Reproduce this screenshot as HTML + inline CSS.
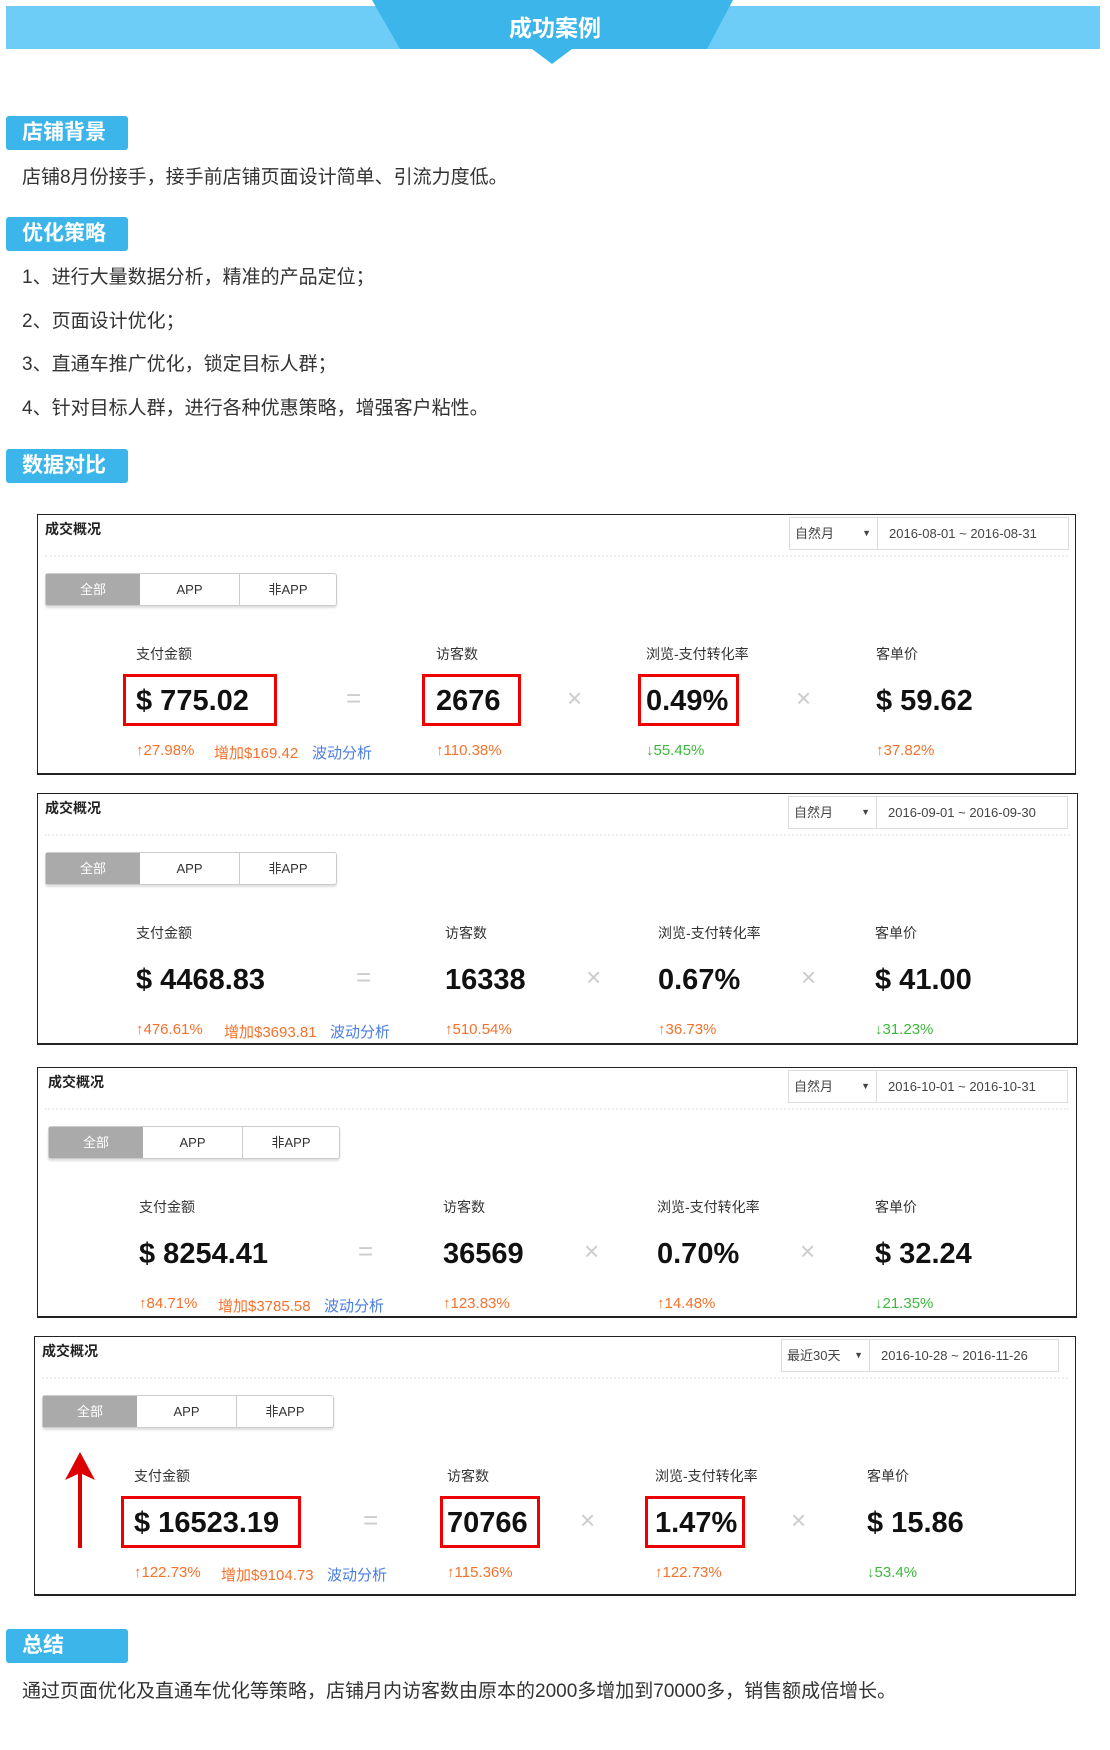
<!DOCTYPE html>
<html><head><meta charset="utf-8"><style>
*{margin:0;padding:0;box-sizing:border-box}
body{width:1110px;height:1750px;background:#fff;position:relative;overflow:hidden;font-family:"Liberation Sans","Noto Sans CJK SC",sans-serif;color:#333}
.a{position:absolute;white-space:nowrap}
.lbl{position:absolute;left:6px;width:122px;height:34px;background:#3bb5ea;border-radius:3px;color:#fff;font-weight:bold;font-size:21px;line-height:34px;padding-left:16px}
.txt{position:absolute;left:22px;font-size:19px;color:#333;line-height:24px}
.panel{position:absolute;border:1px solid #222;border-width:1px 1px 2px 1px;background:#fff}
.panel .t{position:absolute;left:7px;top:4px;font-size:14px;font-weight:bold;color:#222}
.dd{position:absolute;top:2px;height:33px;border:1px solid #ddd;font-size:13px;color:#444;line-height:31px;background:#fff}
.dot{position:absolute;left:7px;right:7px;top:40px;border-top:2px dotted #eee}
.tabs{position:absolute;left:7px;top:58px;width:292px;height:33px;border:1px solid #ccc;border-radius:3px;background:#fff;box-shadow:0 2px 2px #ddd;font-size:13px}
.tabs div{position:absolute;top:0;height:31px;line-height:31px;text-align:center}
.lab{position:absolute;top:129px;font-size:14px;color:#333}
.val{position:absolute;top:166px;font-size:29px;font-weight:bold;color:#111;line-height:40px}
.box{position:absolute;top:159px;height:52px;border:3px solid #e00}
.op{position:absolute;top:168px;font-size:26px;color:#ccc}
.st{position:absolute;top:227px;font-size:15px}
.o{color:#f5712b}.g{color:#3cb83c}.b{color:#4a7ee0}
</style></head><body>
<div class="a" style="left:6px;top:6px;width:1094px;height:43px;background:#6dcdf7"></div>
<div class="a" style="left:0;top:0;width:1110px;height:70px"><svg width="1110" height="70"><polygon points="372,0 733,0 707,49 572,49 552,64 532,49 400,49" fill="#3bb5ea"/></svg></div>
<div class="a" style="left:0;width:1110px;top:12px;text-align:center;color:#fff;font-weight:bold;font-size:23px;line-height:32px">成功案例</div>

<div class="lbl" style="top:116px">店铺背景</div>
<div class="txt" style="top:166px">店铺8月份接手，接手前店铺页面设计简单、引流力度低。</div>
<div class="lbl" style="top:217px">优化策略</div>
<div class="txt" style="top:266px">1、进行大量数据分析，精准的产品定位；</div>
<div class="txt" style="top:310px">2、页面设计优化；</div>
<div class="txt" style="top:353px">3、直通车推广优化，锁定目标人群；</div>
<div class="txt" style="top:397px">4、针对目标人群，进行各种优惠策略，增强客户粘性。</div>
<div class="lbl" style="top:449px">数据对比</div>

<!-- panel 1 -->
<div class="panel" style="left:37px;top:514px;width:1039px;height:261px">
<div class="t">成交概况</div>
<div class="dd" style="left:751px;width:89px;padding-left:5px">自然月<span style="position:absolute;right:6px;font-size:9px">▼</span></div>
<div class="dd" style="left:839px;width:192px;padding-left:11px">2016-08-01 ~ 2016-08-31</div>
<div class="dot"></div>
<div class="tabs"><div style="left:0;width:94px;background:#aaa;color:#fff">全部</div><div style="left:94px;width:100px;border-right:1px solid #ccc">APP</div><div style="left:194px;width:96px">非APP</div></div>
<div class="lab" style="left:98px">支付金额</div><div class="lab" style="left:398px">访客数</div><div class="lab" style="left:608px">浏览-支付转化率</div><div class="lab" style="left:838px">客单价</div>
<div class="box" style="left:85px;width:154px"></div><div class="box" style="left:384px;width:99px"></div><div class="box" style="left:600px;width:101px"></div>
<div class="val" style="left:98px">$ 775.02</div><div class="val" style="left:398px">2676</div><div class="val" style="left:608px">0.49%</div><div class="val" style="left:838px">$ 59.62</div>
<div class="op" style="left:308px">=</div><div class="op" style="left:529px">×</div><div class="op" style="left:758px">×</div>
<div class="st o" style="left:98px">↑27.98%</div><div class="st o" style="left:176px">增加$169.42</div><div class="st b" style="left:274px">波动分析</div><div class="st o" style="left:398px">↑110.38%</div><div class="st g" style="left:608px">↓55.45%</div><div class="st o" style="left:838px">↑37.82%</div>
</div>

<!-- panel 2 -->
<div class="panel" style="left:37px;top:793px;width:1041px;height:252px">
<div class="t">成交概况</div>
<div class="dd" style="left:750px;width:89px;padding-left:5px">自然月<span style="position:absolute;right:6px;font-size:9px">▼</span></div>
<div class="dd" style="left:838px;width:192px;padding-left:11px">2016-09-01 ~ 2016-09-30</div>
<div class="dot"></div>
<div class="tabs"><div style="left:0;width:94px;background:#aaa;color:#fff">全部</div><div style="left:94px;width:100px;border-right:1px solid #ccc">APP</div><div style="left:194px;width:96px">非APP</div></div>
<div class="lab" style="left:98px">支付金额</div><div class="lab" style="left:407px">访客数</div><div class="lab" style="left:620px">浏览-支付转化率</div><div class="lab" style="left:837px">客单价</div>
<div class="val" style="left:98px">$ 4468.83</div><div class="val" style="left:407px">16338</div><div class="val" style="left:620px">0.67%</div><div class="val" style="left:837px">$ 41.00</div>
<div class="op" style="left:318px">=</div><div class="op" style="left:548px">×</div><div class="op" style="left:763px">×</div>
<div class="st o" style="left:98px">↑476.61%</div><div class="st o" style="left:186px">增加$3693.81</div><div class="st b" style="left:292px">波动分析</div><div class="st o" style="left:407px">↑510.54%</div><div class="st o" style="left:620px">↑36.73%</div><div class="st g" style="left:837px">↓31.23%</div>
</div>

<!-- panel 3 -->
<div class="panel" style="left:37px;top:1067px;width:1040px;height:251px">
<div class="t" style="left:10px">成交概况</div>
<div class="dd" style="left:750px;width:89px;padding-left:5px">自然月<span style="position:absolute;right:6px;font-size:9px">▼</span></div>
<div class="dd" style="left:838px;width:192px;padding-left:11px">2016-10-01 ~ 2016-10-31</div>
<div class="dot"></div>
<div class="tabs" style="left:10px"><div style="left:0;width:94px;background:#aaa;color:#fff">全部</div><div style="left:94px;width:100px;border-right:1px solid #ccc">APP</div><div style="left:194px;width:96px">非APP</div></div>
<div class="lab" style="left:101px">支付金额</div><div class="lab" style="left:405px">访客数</div><div class="lab" style="left:619px">浏览-支付转化率</div><div class="lab" style="left:837px">客单价</div>
<div class="val" style="left:101px">$ 8254.41</div><div class="val" style="left:405px">36569</div><div class="val" style="left:619px">0.70%</div><div class="val" style="left:837px">$ 32.24</div>
<div class="op" style="left:320px">=</div><div class="op" style="left:546px">×</div><div class="op" style="left:762px">×</div>
<div class="st o" style="left:101px">↑84.71%</div><div class="st o" style="left:180px">增加$3785.58</div><div class="st b" style="left:286px">波动分析</div><div class="st o" style="left:405px">↑123.83%</div><div class="st o" style="left:619px">↑14.48%</div><div class="st g" style="left:837px">↓21.35%</div>
</div>

<!-- panel 4 -->
<div class="panel" style="left:34px;top:1336px;width:1042px;height:260px">
<div class="t">成交概况</div>
<div class="dd" style="left:746px;width:89px;padding-left:5px">最近30天<span style="position:absolute;right:6px;font-size:9px">▼</span></div>
<div class="dd" style="left:834px;width:190px;padding-left:11px">2016-10-28 ~ 2016-11-26</div>
<div class="dot"></div>
<div class="tabs"><div style="left:0;width:94px;background:#aaa;color:#fff">全部</div><div style="left:94px;width:100px;border-right:1px solid #ccc">APP</div><div style="left:194px;width:96px">非APP</div></div>
<svg style="position:absolute;left:30px;top:115px" width="30" height="100"><polygon points="15,0 30,28 17,22 17,96 13,96 13,22 0,28" fill="#d00"/></svg>
<div class="lab" style="left:99px">支付金额</div><div class="lab" style="left:412px">访客数</div><div class="lab" style="left:620px">浏览-支付转化率</div><div class="lab" style="left:832px">客单价</div>
<div class="box" style="left:86px;width:180px"></div><div class="box" style="left:405px;width:100px"></div><div class="box" style="left:610px;width:100px"></div>
<div class="val" style="left:99px">$ 16523.19</div><div class="val" style="left:412px">70766</div><div class="val" style="left:620px">1.47%</div><div class="val" style="left:832px">$ 15.86</div>
<div class="op" style="left:328px">=</div><div class="op" style="left:545px">×</div><div class="op" style="left:756px">×</div>
<div class="st o" style="left:99px">↑122.73%</div><div class="st o" style="left:186px">增加$9104.73</div><div class="st b" style="left:292px">波动分析</div><div class="st o" style="left:412px">↑115.36%</div><div class="st o" style="left:620px">↑122.73%</div><div class="st g" style="left:832px">↓53.4%</div>
</div>

<div class="lbl" style="top:1629px">总结</div>
<div class="txt" style="top:1680px">通过页面优化及直通车优化等策略，店铺月内访客数由原本的2000多增加到70000多，销售额成倍增长。</div>
</body></html>
